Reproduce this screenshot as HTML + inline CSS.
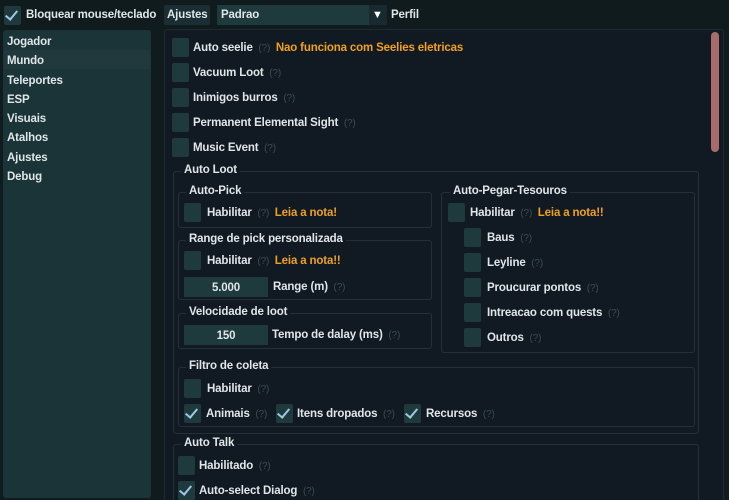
<!DOCTYPE html>
<html><head><style>
*{margin:0;padding:0;box-sizing:border-box}
html,body{width:729px;height:500px;overflow:hidden}
body{background:#0f1b1d;font-family:"Liberation Sans",sans-serif;font-size:11.5px;line-height:17px;letter-spacing:-0.15px;font-weight:bold;color:#dfe6e8;position:relative}
.a{position:absolute;white-space:nowrap}
.cb{position:absolute;width:17px;height:19px;background:#1f3a3d;border-radius:2px}
.cb.on::after{content:"";position:absolute;left:4px;top:2px;width:5px;height:10px;border:solid #9ec8e8;border-width:0 2.5px 2.5px 0;transform:rotate(40deg)}
.q{color:#3b4b50;font-weight:normal;font-size:10px}
.o{color:#f0a020}
.g{position:absolute;border:1px solid #243036;border-radius:3px}
.gt{position:absolute;background:#111a22;padding:0 3px}
.inp{position:absolute;height:20px;background:#1f3a3d;text-align:center;line-height:22px}
</style></head><body>
<div class="cb on" style="left:4px;top:6px"></div>
<div class="a" style="left:26px;top:7px">Bloquear mouse/teclado</div>
<div class="a" style="left:164px;top:5px;width:46px;height:20px;background:#1a2e33;border-radius:2px;padding:2px 3px">Ajustes</div>
<div class="a" style="left:217px;top:5px;width:152px;height:20px;background:#1f3a3d;padding:2px 4px">Padrao</div>
<div class="a" style="left:369px;top:5px;width:18px;height:20px;background:#172a2f;color:#fff;font-size:11px;padding:2px 3px">▼</div>
<div class="a" style="left:391px;top:7px">Perfil</div>

<div class="a" style="left:3px;top:30px;width:148px;height:468px;background:#1a3437;border-radius:3px"></div>
<div class="a" style="left:4px;top:50px;width:146px;height:19px;background:#21393c"></div>
<div class="a" style="left:7px;top:33px;line-height:19.3px">Jogador<br>Mundo<br>Teleportes<br>ESP<br>Visuais<br>Atalhos<br>Ajustes<br>Debug</div>

<div class="a" style="left:164px;top:29px;width:560px;height:475px;background:#111a22;border:1px solid #1e2a30;border-radius:3px"></div>
<div class="a" style="left:711px;top:32px;width:8px;height:120px;background:#a86c6c;border-radius:4px"></div>

<div class="cb" style="left:172px;top:38px"></div><div class="a" style="left:193px;top:40px">Auto seelie <span class="q">&nbsp;(?)&nbsp;</span> <span class="o">Nao funciona com Seelies eletricas</span></div>
<div class="cb" style="left:172px;top:63px"></div><div class="a" style="left:193px;top:65px">Vacuum Loot <span class="q">&nbsp;(?)</span></div>
<div class="cb" style="left:172px;top:88px"></div><div class="a" style="left:193px;top:90px">Inimigos burros <span class="q">&nbsp;(?)</span></div>
<div class="cb" style="left:172px;top:113px"></div><div class="a" style="left:193px;top:115px">Permanent Elemental Sight <span class="q">&nbsp;(?)</span></div>
<div class="cb" style="left:172px;top:138px"></div><div class="a" style="left:193px;top:140px">Music Event <span class="q">&nbsp;(?)</span></div>

<div class="g" style="left:173px;top:171px;width:526px;height:263px"></div><div class="gt" style="left:181px;top:162px">Auto Loot</div>
<div class="g" style="left:178px;top:192px;width:254px;height:36px"></div><div class="gt" style="left:186px;top:183px">Auto-Pick</div>
<div class="cb" style="left:184px;top:203px"></div><div class="a" style="left:207px;top:205px">Habilitar <span class="q">&nbsp;(?)&nbsp;</span> <span class="o">Leia a nota!</span></div>
<div class="g" style="left:178px;top:240px;width:254px;height:60px"></div><div class="gt" style="left:186px;top:231px">Range de pick personalizada</div>
<div class="cb" style="left:184px;top:251px"></div><div class="a" style="left:207px;top:253px">Habilitar <span class="q">&nbsp;(?)&nbsp;</span> <span class="o">Leia a nota!!</span></div>
<div class="inp" style="left:184px;top:277px;width:84px">5.000</div><div class="a" style="left:273px;top:279px">Range (m) <span class="q">&nbsp;(?)</span></div>
<div class="g" style="left:178px;top:313px;width:254px;height:36px"></div><div class="gt" style="left:186px;top:304px">Velocidade de loot</div>
<div class="inp" style="left:184px;top:325px;width:84px">150</div><div class="a" style="left:272px;top:327px">Tempo de dalay (ms) <span class="q">&nbsp;(?)</span></div>

<div class="g" style="left:441px;top:192px;width:254px;height:161px"></div><div class="gt" style="left:450px;top:183px">Auto-Pegar-Tesouros</div>
<div class="cb" style="left:448px;top:203px"></div><div class="a" style="left:470px;top:205px">Habilitar <span class="q">&nbsp;(?)&nbsp;</span> <span class="o">Leia a nota!!</span></div>
<div class="cb" style="left:464px;top:228px"></div><div class="a" style="left:487px;top:230px">Baus <span class="q">&nbsp;(?)</span></div>
<div class="cb" style="left:464px;top:253px"></div><div class="a" style="left:487px;top:255px">Leyline <span class="q">&nbsp;(?)</span></div>
<div class="cb" style="left:464px;top:278px"></div><div class="a" style="left:487px;top:280px">Proucurar pontos <span class="q">&nbsp;(?)</span></div>
<div class="cb" style="left:464px;top:303px"></div><div class="a" style="left:487px;top:305px">Intreacao com quests <span class="q">&nbsp;(?)</span></div>
<div class="cb" style="left:464px;top:328px"></div><div class="a" style="left:487px;top:330px">Outros <span class="q">&nbsp;(?)</span></div>

<div class="g" style="left:178px;top:367px;width:517px;height:60px"></div><div class="gt" style="left:186px;top:358px">Filtro de coleta</div>
<div class="cb" style="left:184px;top:379px"></div><div class="a" style="left:207px;top:381px">Habilitar <span class="q">&nbsp;(?)</span></div>
<div class="cb on" style="left:184px;top:404px"></div><div class="a" style="left:206px;top:406px">Animais <span class="q">&nbsp;(?)</span></div>
<div class="cb on" style="left:276px;top:404px"></div><div class="a" style="left:297px;top:406px">Itens dropados <span class="q">&nbsp;(?)</span></div>
<div class="cb on" style="left:404px;top:404px"></div><div class="a" style="left:426px;top:406px">Recursos <span class="q">&nbsp;(?)</span></div>

<div class="g" style="left:173px;top:444px;width:526px;height:70px"></div><div class="gt" style="left:181px;top:435px">Auto Talk</div>
<div class="cb" style="left:178px;top:456px"></div><div class="a" style="left:199px;top:458px">Habilitado <span class="q">&nbsp;(?)</span></div>
<div class="cb on" style="left:178px;top:481px"></div><div class="a" style="left:199px;top:483px">Auto-select Dialog <span class="q">&nbsp;(?)</span></div>
</body></html>
